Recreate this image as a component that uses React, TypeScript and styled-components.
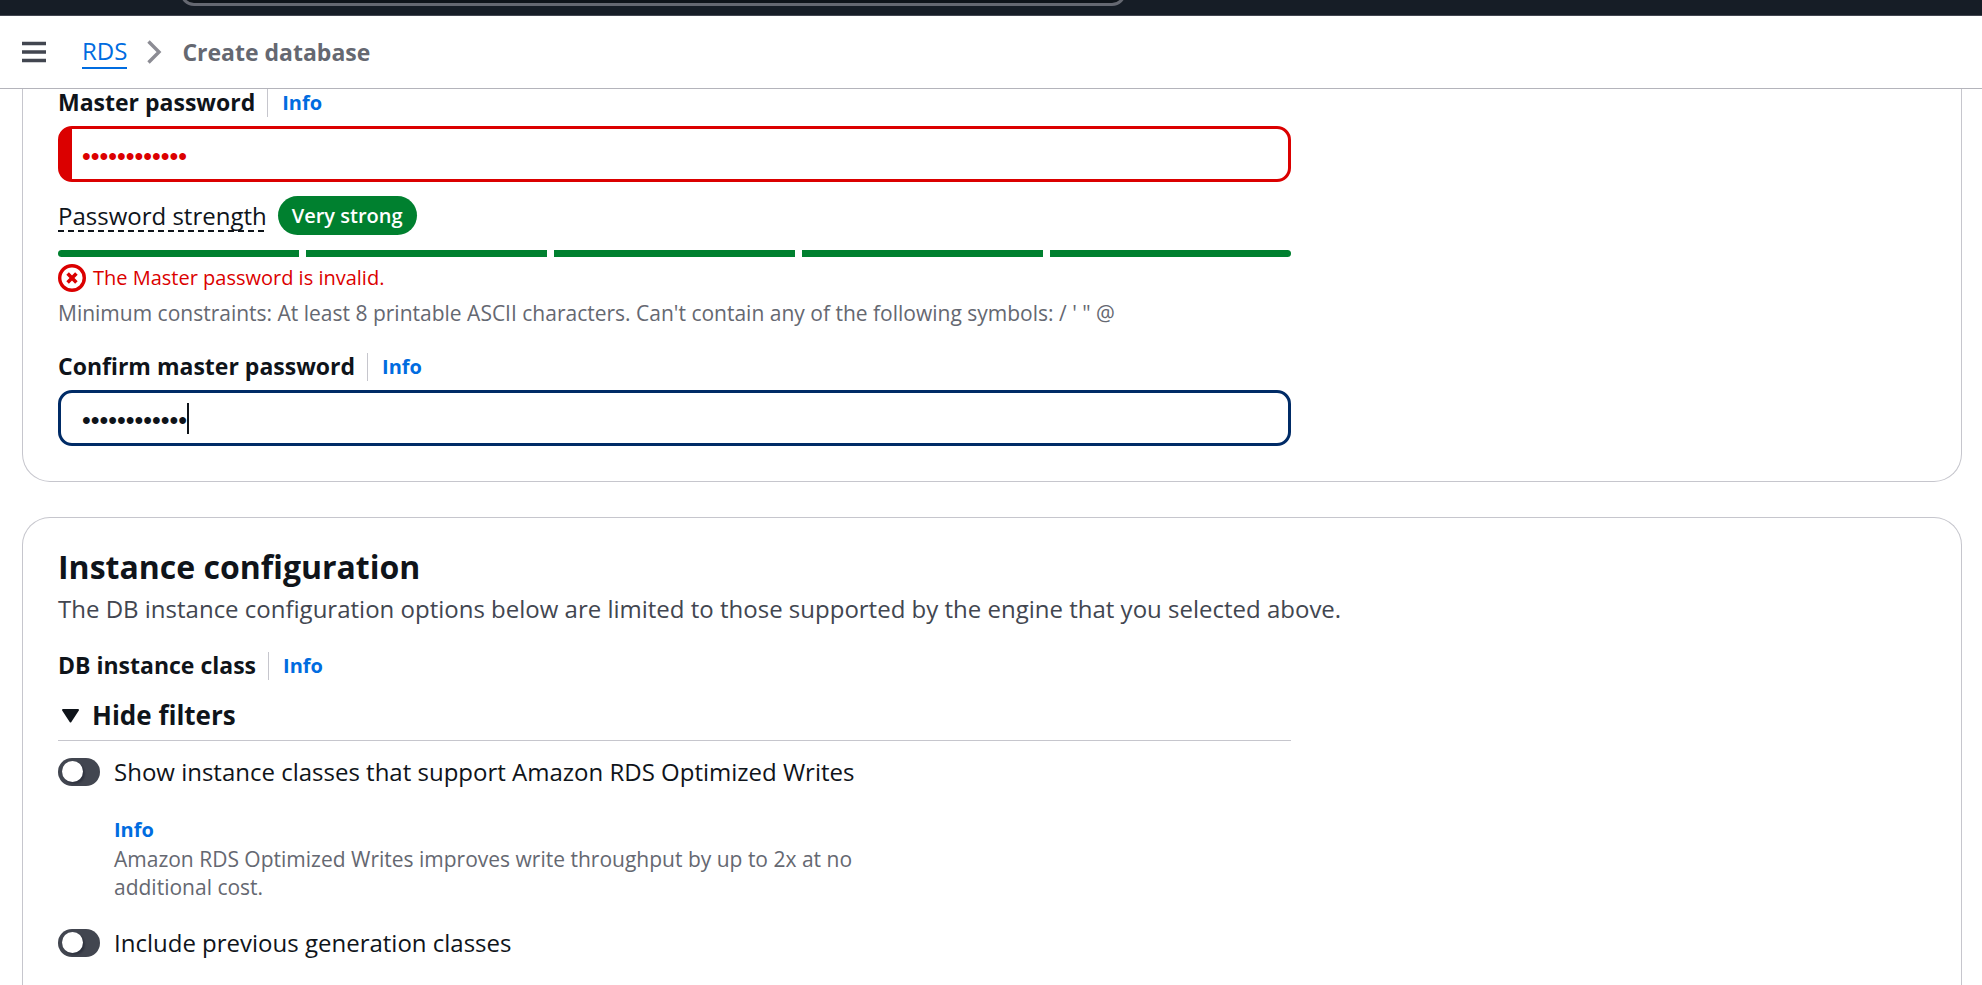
import React, { useState } from "react";
import styled, { createGlobalStyle } from "styled-components";

const ink = "#0f141a";
const muted = "#656871";
const line = "#c6c6cd";
const blue = "#006ce0";
const red = "#db0000";
const green = "#00802f";

const GlobalStyle = createGlobalStyle`
  *, *::before, *::after { box-sizing: border-box; }
  body {
    margin: 0;
    background: #fff;
    color: ${ink};
    font-family: "Open Sans", "Noto Sans", sans-serif;
    font-size: 24px;
    line-height: 35px;
  }
  h2, h3, p { margin: 0; }
  button, input { font: inherit; color: inherit; }
`;

const Page = styled.div`
  display: flex;
  flex-direction: column;
  min-height: 100vh;
`;

const TopBar = styled.div`
  display: flex;
  align-items: flex-end;
  height: 16px;
  padding: 0 0 9px 180px;
  overflow: hidden;
  background: #161d26;
  border-bottom: 1px solid #424650;
`;

const SearchBox = styled.input`
  width: 946px;
  height: 42px;
  border: 3px solid ${muted};
  border-radius: 14px;
  background: ${ink};
`;

const Header = styled.header`
  display: flex;
  align-items: center;
  gap: 35px;
  height: 73px;
  padding: 0 21px;
  border-bottom: 1px solid #b4b4bb;
`;

const IconButton = styled.button`
  display: flex;
  padding: 0;
  border: 0;
  background: none;
  cursor: pointer;
`;

const Crumbs = styled.nav`
  display: flex;
  align-items: center;
  gap: 20px;
  color: ${muted};
  font-size: 23px;
  font-weight: 700;
  line-height: 32px;

  a {
    color: ${blue};
    font-size: 24px;
    font-weight: 400;
    text-decoration: none;
    border-bottom: 2px solid ${blue};
  }
`;

const Main = styled.main`
  display: flex;
  flex: 1;
  flex-direction: column;
  gap: 35px;
  padding: 0 20px 0 22px;
`;

const Card = styled.section<{ $open: "top" | "bottom" }>`
  padding: ${(p) => (p.$open === "top" ? "0 35px 35px" : "26px 35px 25px")};
  border: 1px solid ${line};
  border-radius: ${(p) => (p.$open === "top" ? "0 0 28px 28px" : "28px 28px 0 0")};
  border-${(p) => p.$open}: 0;
  flex-grow: ${(p) => (p.$open === "bottom" ? 1 : 0)};
`;

const Column = styled.div`
  display: flex;
  flex-direction: column;
  width: 66%;
`;

const LabelRow = styled.div`
  display: flex;
  align-items: center;
  height: 28px;
  margin-bottom: 9px;
`;

const Label = styled.label`
  padding: 0 12px 2px 0;
  font-size: 23px;
  font-weight: 700;
`;

const InfoLink = styled.a`
  color: ${blue};
  font-size: 20px;
  font-weight: 700;
  line-height: 28px;
  text-decoration: none;

  ${LabelRow} & {
    padding-left: 14px;
    border-left: 1px solid ${line};
  }
`;

const Field = styled.div`
  position: relative;
  display: flex;
`;

const PasswordInput = styled.input<{ $invalid?: boolean }>`
  flex: 1;
  min-width: 0;
  height: 56px;
  padding: 4px 21px 0 ${(p) => (p.$invalid ? 10 : 21)}px;
  border: 3px solid ${(p) => (p.$invalid ? red : "#002b66")};
  border-left-width: ${(p) => (p.$invalid ? 14 : 3)}px;
  border-radius: 14px;
  outline: 0;
  background: #fff;
  color: ${(p) => (p.$invalid ? red : ink)};
  font-family: "Liberation Sans", Arial, sans-serif;
  font-size: 25px;
  caret-color: transparent;
`;

const Caret = styled.span`
  position: absolute;
  top: 13px;
  left: 129px;
  width: 2px;
  height: 31px;
  background: ${ink};
`;

const StrengthRow = styled.div`
  display: flex;
  align-items: center;
  gap: 11px;
  margin: 14px 0 15px;
`;

const StrengthLabel = styled.span`
  line-height: 32px;
  background: repeating-linear-gradient(90deg, ${ink} 0 6px, transparent 6px 10px) left bottom / 100% 2px no-repeat;
`;

const Badge = styled.span`
  padding: 0 14px;
  border-radius: 20px;
  background: ${green};
  color: #fff;
  font-size: 20px;
  font-weight: 600;
  line-height: 39px;
`;

const Meter = styled.div`
  display: flex;
  gap: 7px;
  height: 7px;
  border-radius: 4px;
  overflow: hidden;
`;

const MeterStep = styled.span`
  flex: 1;
  background: ${green};
`;

const ErrorText = styled.div`
  display: flex;
  align-items: center;
  gap: 7px;
  margin-top: 7px;
  color: ${red};
  font-size: 20px;
  line-height: 28px;
`;

const Hint = styled.p`
  color: ${muted};
  font-size: 21px;
  line-height: 28px;
`;

const ConfirmGroup = styled.div`
  margin-top: 26px;
`;

const FieldHint = styled(Hint)`
  margin-top: 7px;
`;

const Title = styled.h2`
  padding-bottom: 2px;
  font-size: 32px;
  font-weight: 700;
  line-height: 45px;
`;

const Description = styled.p`
  margin-bottom: 26px;
  color: #424650;
`;

const ExpandButton = styled.button`
  display: flex;
  align-items: center;
  gap: 12px;
  padding: 9px 0 7px 3px;
  border: 0;
  border-bottom: 1px solid ${line};
  background: none;
  font-size: 26px;
  font-weight: 700;
  text-align: left;
  cursor: pointer;
`;

const ToggleRow = styled.label`
  display: flex;
  align-items: center;
  gap: 14px;
  cursor: pointer;
`;

const Toggle = styled.input`
  appearance: none;
  display: flex;
  align-items: center;
  width: 42px;
  height: 28px;
  margin: 0;
  padding: 0 4px;
  border-radius: 14px;
  background: #424650;
  cursor: pointer;

  &::before {
    content: "";
    width: 21px;
    height: 21px;
    border-radius: 50%;
    background: #fff;
    box-shadow: 2px 2px 2px rgba(0, 7, 22, 0.3);
  }
  &:checked { background: ${blue}; justify-content: flex-end; }
`;

const ToggleDetail = styled.div`
  max-width: 820px;
  padding: 21px 0 0 56px;
`;

const Filters = styled.div`
  display: flex;
  flex-direction: column;
  gap: 24px;
  padding-top: 13px;
`;

const MenuIcon = () => (
  <svg width="26" height="22" viewBox="0 0 26 22" aria-hidden="true">
    <path d="M1 2.500h24M1 11h24M1 19.500h24" stroke="#424650" strokeWidth="3.4" />
  </svg>
);

const ChevronIcon = () => (
  <svg width="15" height="24" viewBox="0 0 15 24" fill="none" aria-hidden="true">
    <path d="M1.500 1.500 12 12 1.500 22.500" stroke="#8c8c94" strokeWidth="3.4" />
  </svg>
);

const ErrorIcon = () => (
  <svg width="28" height="28" viewBox="0 0 28 28" fill="none" stroke={red} aria-hidden="true">
    <circle cx="14" cy="14" r="12.3" strokeWidth="3.4" />
    <path d="m9.600 9.600 8.800 8.800m0-8.800-8.800 8.800" strokeWidth="3.6" />
  </svg>
);

const CaretDownIcon = () => (
  <svg width="19" height="16" viewBox="0 0 19 16" aria-hidden="true">
    <path d="M2 2h15L9.500 13.500Z" fill={ink} stroke={ink} strokeWidth="2" strokeLinejoin="round" />
  </svg>
);

export default function App() {
  const [master, setMaster] = useState("Passw0rd@123");
  const [confirm, setConfirm] = useState("Passw0rd@123");

  return (
    <>
      <GlobalStyle />
      <Page>
        <TopBar>
          <SearchBox type="search" aria-label="Search" />
        </TopBar>
        <Header>
          <IconButton type="button" aria-label="Open navigation">
            <MenuIcon />
          </IconButton>
          <Crumbs aria-label="Breadcrumbs">
            <a href="#rds">RDS</a>
            <ChevronIcon />
            <span aria-current="page">Create database</span>
          </Crumbs>
        </Header>
        <Main>
          <Card $open="top">
            <Column>
              <LabelRow>
                <Label htmlFor="master">Master password</Label>
                <InfoLink href="#master-info">Info</InfoLink>
              </LabelRow>
              <Field>
                <PasswordInput
                  id="master"
                  type="password"
                  $invalid
                  aria-invalid="true"
                  value={master}
                  onChange={(e) => setMaster(e.target.value)}
                />
              </Field>
              <StrengthRow>
                <StrengthLabel>Password strength</StrengthLabel>
                <Badge>Very strong</Badge>
              </StrengthRow>
              <Meter>
                {[1, 2, 3, 4, 5].map((n) => (
                  <MeterStep key={n} />
                ))}
              </Meter>
              <ErrorText role="alert">
                <ErrorIcon />
                The Master password is invalid.
              </ErrorText>
              <FieldHint>
                Minimum constraints: At least 8 printable ASCII characters. Can't contain any of the following
                symbols: / ' " @
              </FieldHint>
              <ConfirmGroup>
                <LabelRow>
                  <Label htmlFor="confirm">Confirm master password</Label>
                  <InfoLink href="#confirm-info">Info</InfoLink>
                </LabelRow>
                <Field>
                  <PasswordInput
                    id="confirm"
                    type="password"
                    value={confirm}
                    onChange={(e) => setConfirm(e.target.value)}
                  />
                  <Caret />
                </Field>
              </ConfirmGroup>
            </Column>
          </Card>
          <Card $open="bottom">
            <Title>Instance configuration</Title>
            <Description>
              The DB instance configuration options below are limited to those supported by the engine that you
              selected above.
            </Description>
            <Column>
              <LabelRow>
                <Label as="h3">DB instance class</Label>
                <InfoLink href="#class-info">Info</InfoLink>
              </LabelRow>
              <ExpandButton type="button" aria-expanded="true">
                <CaretDownIcon />
                Hide filters
              </ExpandButton>
              <Filters>
                <div>
                  <ToggleRow>
                    <Toggle type="checkbox" role="switch" />
                    Show instance classes that support Amazon RDS Optimized Writes
                  </ToggleRow>
                  <ToggleDetail>
                    <InfoLink href="#writes-info">Info</InfoLink>
                    <Hint>
                      Amazon RDS Optimized Writes improves write throughput by up to 2x at no additional cost.
                    </Hint>
                  </ToggleDetail>
                </div>
                <ToggleRow>
                  <Toggle type="checkbox" role="switch" />
                  Include previous generation classes
                </ToggleRow>
              </Filters>
            </Column>
          </Card>
        </Main>
      </Page>
    </>
  );
}
